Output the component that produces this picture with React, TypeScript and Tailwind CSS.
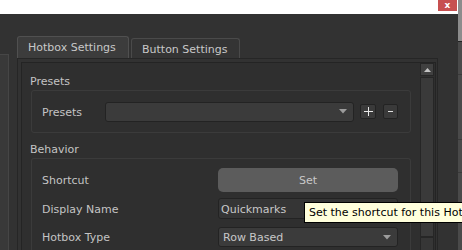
import React from "react";

function ComboArrow() {
  return (
    <svg width="8" height="5" viewBox="0 0 8 5" className="shrink-0">
      <path d="M0 0 L8 0 L4 4.5 Z" fill="#9c9c9c" />
    </svg>
  );
}

function GroupTitle({ children }: { children: React.ReactNode }) {
  return <div className="pl-[8px] leading-[14px] text-[#c4c4c4]">{children}</div>;
}

function FormRow({
  label,
  className,
  children,
}: {
  label: string;
  className?: string;
  children: React.ReactNode;
}) {
  return (
    <div className={"flex items-center " + (className ?? "")}>
      <span className="w-[176px] pt-[3px] text-[#c4c4c4]">{label}</span>
      {children}
    </div>
  );
}

export default function App() {
  return (
    <div className="relative flex h-[250px] w-[462px] overflow-hidden bg-[#323232] font-['DejaVu_Sans',sans-serif] text-[11px]">
      <div className="flex w-[458px] flex-col">
        {/* title strip */}
        <div className="flex h-[14px] shrink-0 justify-end bg-white pr-px">
          <div className="flex h-[11px] w-[19px] items-center justify-center bg-[#c75050] text-[9px] font-bold leading-none text-white">
            x
          </div>
        </div>

        <div className="flex min-h-0 flex-1">
          <div className="mt-[40px] w-[9px] shrink-0 border-r border-t border-[#464646] bg-[#393939]" />

          <div className="ml-[8px] mt-[22px] flex w-[421px] flex-col">
            {/* tabs */}
            <div className="flex h-[22px] shrink-0 items-end">
              <div className="flex h-[22px] w-[112px] items-center rounded-t-[3px] border border-b-0 border-[#505050] bg-[#3c3c3c] pl-[10px] pt-[2px] text-[#c8c8c8]">
                Hotbox Settings
              </div>
              <div className="ml-[2px] flex h-[20px] w-[109px] items-center rounded-t-[3px] border border-b-0 border-[#4a4a4a] bg-[#343434] pl-[10px] pt-[3px] text-[#c8c8c8]">
                Button Settings
              </div>
            </div>

            {/* pane */}
            <div className="flex min-h-0 flex-1 border border-b-0 border-[#262626] bg-[#323232] pl-[3px] pr-px pt-[3px]">
              <div className="flex min-h-0 flex-1 border border-b-0 border-[#242424] bg-[#2f2f2f] pr-px">
                {/* content */}
                <div className="flex w-[398px] flex-col pt-[12px]">
                  <GroupTitle>Presets</GroupTitle>
                  <div className="ml-[9px] mt-[1px] flex h-[43px] w-[380px] items-center rounded-[3px] border border-[#3b3b3b] pl-[10px]">
                    <span className="w-[63px] pt-[3px] text-[#c4c4c4]">Presets</span>
                    <div className="flex h-[20px] w-[249px] items-center justify-end rounded-[3px] border border-[#232323] bg-[#3b3b3b] pr-[6px]">
                      <ComboArrow />
                    </div>
                    <button className="ml-[6px] flex h-[15px] w-[16px] items-center justify-center rounded-[2px] border border-[#232323] bg-[#3a3a3a]">
                      <svg width="9" height="9" viewBox="0 0 9 9">
                        <path d="M0 4.5 H9 M4.5 0 V9" stroke="#e8e8e8" strokeWidth="1" />
                      </svg>
                    </button>
                    <button className="ml-[7px] flex h-[15px] w-[15px] items-center justify-center rounded-[2px] border border-[#232323] bg-[#3a3a3a]">
                      <svg width="5" height="3" viewBox="0 0 5 3">
                        <path d="M0 1.5 H5" stroke="#e0e0e0" strokeWidth="1" />
                      </svg>
                    </button>
                  </div>

                  <div className="mt-[10px]">
                    <GroupTitle>Behavior</GroupTitle>
                  </div>
                  <div className="ml-[9px] mt-[1px] w-[380px] flex-1 rounded-t-[3px] border border-b-0 border-[#3b3b3b] pl-[10px] pt-[9px]">
                    <FormRow label="Shortcut">
                      <button className="h-[24px] w-[180px] rounded-[5px] bg-[#5c5c5c] pt-[2px] text-[11px] text-[#c8c8c8]">
                        Set
                      </button>
                    </FormRow>
                    <FormRow label="Display Name" className="mt-[6px]">
                      <div className="flex h-[21px] w-[180px] items-center rounded-[3px] border border-[#232323] bg-[#353535] pl-[2px] pt-[3px] text-[#c8c8c8]">
                        Quickmarks
                      </div>
                    </FormRow>
                    <FormRow label="Hotbox Type" className="mt-[8px]">
                      <div className="flex h-[20px] w-[180px] items-center justify-between rounded-[3px] border border-[#232323] bg-[#3b3b3b] pl-[4px] pr-[6px] text-[#c8c8c8]">
                        <span className="pt-[2px]">Row Based</span>
                        <ComboArrow />
                      </div>
                    </FormRow>
                  </div>
                </div>

                {/* scrollbar */}
                <div className="flex w-[14px] flex-col">
                  <div className="flex h-[13px] items-center justify-center border border-[#262626] bg-[#404040]">
                    <svg width="7" height="4" viewBox="0 0 7 4">
                      <path d="M0 4 L7 4 L3.5 0 Z" fill="#c4c4c4" />
                    </svg>
                  </div>
                  <div className="mt-[1px] h-[160px] border border-[#262626] bg-[#3a3a3a]" />
                  <div className="flex-1 border border-b-0 border-[#262626] bg-[#363636]" />
                </div>
              </div>
            </div>
          </div>
        </div>
      </div>

      {/* right window edge */}
      <div className="flex w-[4px] flex-col">
        <div className="h-[42px] border-b border-[#222] bg-[#8c8c8c]" />
        <div className="h-[33px] border-b border-[#3a3a3a] bg-[#4a4a4a]" />
        <div className="h-[65px] border-b border-[#3a3a3a] bg-[#4a4a4a]" />
        <div className="h-[33px] border-b border-[#3a3a3a] bg-[#4a4a4a]" />
        <div className="flex-1 bg-[#4a4a4a]" />
      </div>

      {/* tooltip */}
      <div className="absolute left-[304px] top-[202px] flex h-[21px] w-[200px] items-center border border-black bg-[#ffffdc] pl-[4px] pt-[2px] text-[11px] whitespace-nowrap text-black">
        Set the shortcut for this Hotbox
      </div>
    </div>
  );
}
